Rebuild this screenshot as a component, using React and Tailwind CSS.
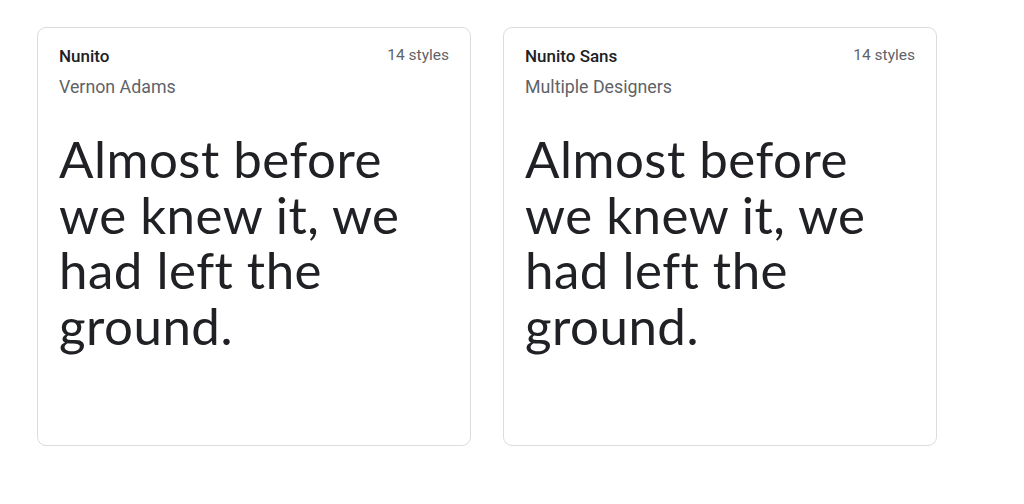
export default function App() {
  const cards = [
    { name: "Nunito", author: "Vernon Adams" },
    { name: "Nunito Sans", author: "Multiple Designers" },
  ];
  return (
    <div className="w-[1024px] h-[504px] bg-white flex gap-[32px] pl-[37px] pt-[27px]">
      {cards.map((c) => (
        <div
          key={c.name}
          className="w-[434px] h-[419px] border border-[#dadce0] rounded-[9px] px-[21px] pt-[16px] flex flex-col"
        >
          <div className="flex justify-between items-start">
            <div className="flex flex-col">
              <div className="text-[17px] leading-[24px] font-medium text-[#202124]" style={{ fontFamily: "Roboto, sans-serif" }}>
                {c.name}
              </div>
              <div className="text-[17.8px] leading-[24px] mt-[7px] text-[#5f6368]" style={{ fontFamily: "Roboto, sans-serif" }}>
                {c.author}
              </div>
            </div>
            <div className="text-[15.5px] leading-[24px] text-[#5f6368] mt-[-1px]" style={{ fontFamily: "Roboto, sans-serif" }}>
              14 styles
            </div>
          </div>
          <div
            className="mt-[32px] text-[51px] leading-[55.5px] tracking-[0.5px] text-[#202124]"
            style={{ fontFamily: "Lato, sans-serif" }}
          >
            <div>Almost before</div>
            <div>we knew it, we</div>
            <div>had left the</div>
            <div>ground.</div>
          </div>
        </div>
      ))}
    </div>
  );
}
